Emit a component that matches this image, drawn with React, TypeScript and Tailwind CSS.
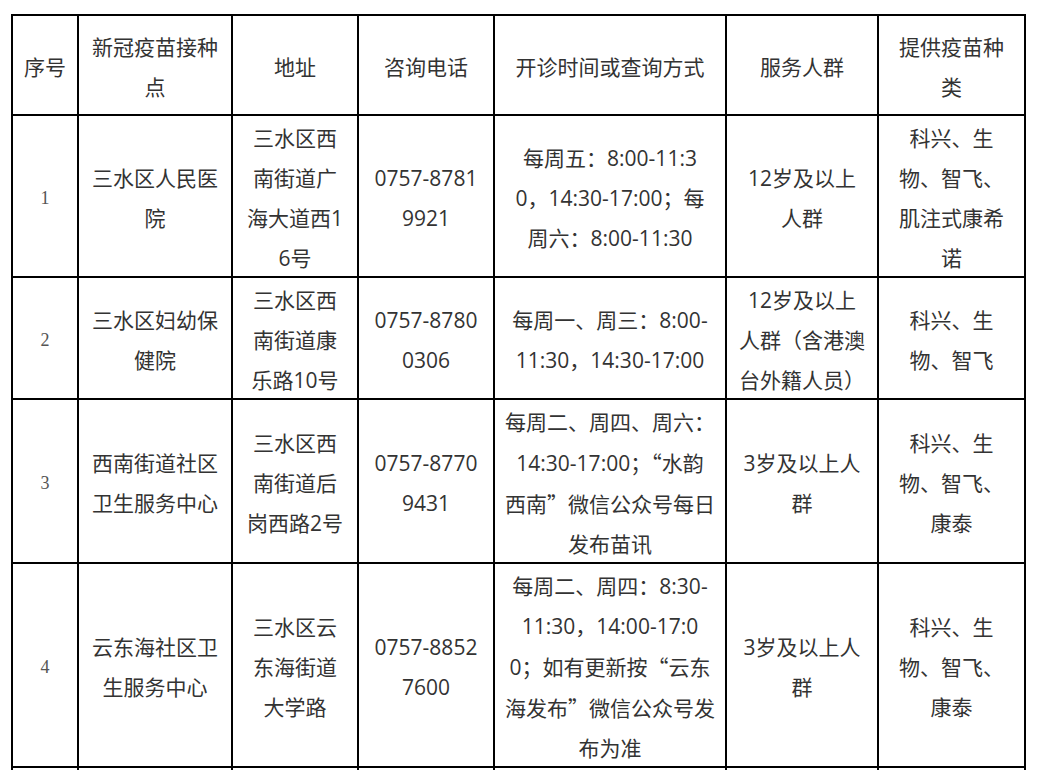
type Row = {
  n: string
  name: string[]
  addr: string[]
  tel: string[]
  time: string[]
  crowd: string[]
  vac: string[]
}

const ROWS: Row[] = [
  {
    n: '1',
    name: ['三水区人民医', '院'],
    addr: ['三水区西', '南街道广', '海大道西1', '6号'],
    tel: ['0757-8781', '9921'],
    time: ['每周五：8:00-11:3', '0，14:30-17:00；每', '周六：8:00-11:30'],
    crowd: ['12岁及以上', '人群'],
    vac: ['科兴、生', '物、智飞、', '肌注式康希', '诺'],
  },
  {
    n: '2',
    name: ['三水区妇幼保', '健院'],
    addr: ['三水区西', '南街道康', '乐路10号'],
    tel: ['0757-8780', '0306'],
    time: ['每周一、周三：8:00-', '11:30，14:30-17:00'],
    crowd: ['12岁及以上', '人群（含港澳', '台外籍人员）'],
    vac: ['科兴、生', '物、智飞'],
  },
  {
    n: '3',
    name: ['西南街道社区', '卫生服务中心'],
    addr: ['三水区西', '南街道后', '岗西路2号'],
    tel: ['0757-8770', '9431'],
    time: ['每周二、周四、周六：', '14:30-17:00；“水韵', '西南”微信公众号每日', '发布苗讯'],
    crowd: ['3岁及以上人', '群'],
    vac: ['科兴、生', '物、智飞、', '康泰'],
  },
  {
    n: '4',
    name: ['云东海社区卫', '生服务中心'],
    addr: ['三水区云', '东海街道', '大学路'],
    tel: ['0757-8852', '7600'],
    time: ['每周二、周四：8:30-', '11:30，14:00-17:0', '0；如有更新按“云东', '海发布”微信公众号发', '布为准'],
    crowd: ['3岁及以上人', '群'],
    vac: ['科兴、生', '物、智飞、', '康泰'],
  },
]

const HEAD = [['序号'], ['新冠疫苗接种', '点'], ['地址'], ['咨询电话'], ['开诊时间或查询方式'], ['服务人群'], ['提供疫苗种', '类']]

// full-width quotes come from the CJK face
function Line({ text }: { text: string }) {
  const parts = text.split(/([“”])/)
  return (
    <div className="whitespace-nowrap">
      {parts.map((p, i) =>
        p === '“' || p === '”' ? (
          <span key={i} className="font-['Noto_Sans_CJK_SC',sans-serif]">{p}</span>
        ) : (
          <span key={i}>{p}</span>
        )
      )}
    </div>
  )
}

function Cell({ lines }: { lines: string[] }) {
  return (
    <td className="border-2 border-black p-0 text-center align-middle">
      <div className="translate-y-[2px]">
        {lines.map((l, i) => <Line key={i} text={l} />)}
      </div>
    </td>
  )
}

export default function App() {
  return (
    <div className="min-h-screen bg-white pl-[11px] pt-[14px] text-[#333] text-[21px] leading-[40px] font-['Open_Sans','Noto_Sans_CJK_SC',sans-serif]">
      <table className="w-[1015px] table-fixed border-collapse">
        <colgroup>
          <col className="w-[66px]" />
          <col className="w-[154px]" />
          <col className="w-[126px]" />
          <col className="w-[136px]" />
          <col className="w-[232px]" />
          <col className="w-[152px]" />
          <col className="w-[147px]" />
        </colgroup>
        <tbody>
          <tr className="h-[100px]">
            {HEAD.map((h, i) => <Cell key={i} lines={h} />)}
          </tr>
          {ROWS.map((r) => (
            <tr key={r.n}>
              <td className="border-2 border-black p-0 text-center align-middle font-['Liberation_Serif',serif] text-[18px] text-[#555]">
                <div className="translate-y-[2px]">{r.n}</div>
              </td>
              <Cell lines={r.name} />
              <Cell lines={r.addr} />
              <Cell lines={r.tel} />
              <Cell lines={r.time} />
              <Cell lines={r.crowd} />
              <Cell lines={r.vac} />
            </tr>
          ))}
          <tr className="h-[120px]">
            {Array.from({ length: 7 }).map((_, i) => <Cell key={i} lines={[]} />)}
          </tr>
        </tbody>
      </table>
    </div>
  )
}
